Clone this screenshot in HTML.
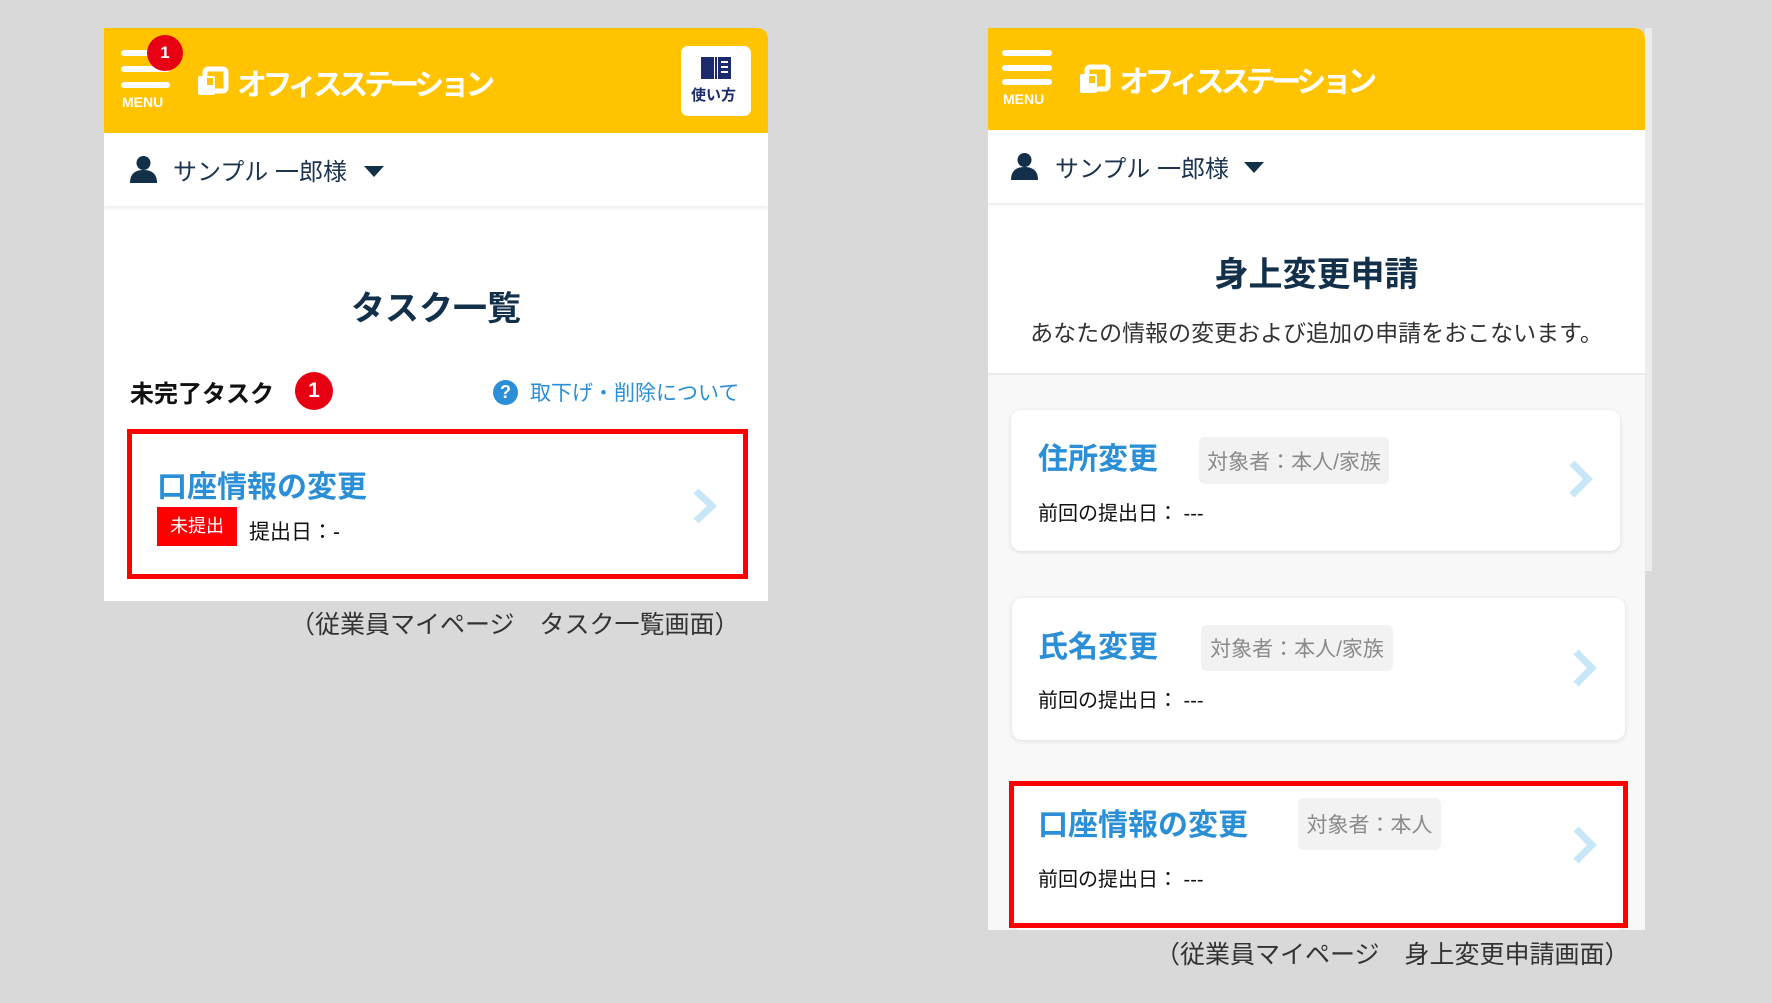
<!DOCTYPE html>
<html><head><meta charset="utf-8"><style>
*{margin:0;padding:0;box-sizing:border-box}
body{width:1772px;height:1003px;background:#d9d9d9;position:relative;overflow:hidden;font-family:"Liberation Sans","Noto Sans CJK JP",sans-serif}
.a{position:absolute;white-space:nowrap}
.panel{position:absolute;background:#fff;overflow:hidden}
.hdr{position:absolute;left:0;top:0;right:0;background:#ffc300;border-top-right-radius:10px}
.line{position:absolute;height:6px;background:#fff;border-radius:3px}
.menu{position:absolute;color:#fff;font-size:14px;font-weight:bold;letter-spacing:0}
.logo{font-size:30px;font-weight:bold;color:#fff;letter-spacing:-4.5px}
.user{font-size:24px;color:#1c3450}
.tri{position:absolute;width:0;height:0;border-left:10px solid transparent;border-right:10px solid transparent;border-top:11px solid #13304a}
.blue{color:#2a8fd6;font-weight:bold}
.tag{position:absolute;background:#f2f2f2;border-radius:6px;color:#8a8a8a;font-size:21px;display:flex;align-items:center;justify-content:center}
.card{position:absolute;background:#fff;border-radius:10px;box-shadow:0 1px 5px rgba(0,0,0,.12)}
.red{position:absolute;border:5px solid #ff0000}
.dt{font-size:20px;color:#111}
.cap{font-size:25px;color:#333}
</style></head><body>

<!-- LEFT PANEL -->
<div class="panel" style="left:104px;top:28px;width:664px;height:573px;border-top-right-radius:10px">
  <div class="hdr" style="height:105px"></div>
  <div class="line" style="left:17px;top:22px;width:49px"></div>
  <div class="line" style="left:17px;top:38px;width:49px"></div>
  <div class="line" style="left:17px;top:54px;width:49px"></div>
  <div class="menu" style="left:18px;top:66px">MENU</div>
  <div class="a" style="left:43px;top:7px;width:36px;height:36px;border-radius:50%;background:#e60012;color:#fff;font-weight:bold;font-size:17px;text-align:center;line-height:36px">1</div>
  <svg class="a" style="left:93px;top:38px" width="32" height="30" viewBox="0 0 32 30"><rect x="8" y="3" width="21" height="22" rx="3" fill="none" stroke="#fff" stroke-width="5"/><rect x="1" y="10" width="17" height="19" rx="2" fill="#fff"/><rect x="10" y="12" width="6" height="7" fill="#ffc300"/></svg>
  <div class="a logo" style="left:133px;top:32px">オフィスステーション</div>
  <div class="a" style="left:577px;top:18px;width:70px;height:70px;background:#fff;border-radius:7px">
    <svg class="a" style="left:18px;top:9px" width="34" height="26" viewBox="0 0 34 26"><path d="M2 2h13v22H2z M19 2h13v22H19z" fill="#1a2a6c"/><path d="M22 7h7M22 12h7M22 17h7" stroke="#fff" stroke-width="2"/><rect x="16" y="2" width="2" height="22" fill="#1a2a6c"/></svg>
    <div class="a" style="left:10px;top:38px;font-size:15px;font-weight:bold;color:#1a2a6c">使い方</div>
  </div>
  <div class="a" style="left:0;top:105px;width:664px;height:73px;box-shadow:0 2px 3px rgba(0,0,0,.08);background:#fff"></div>
  <svg class="a" style="left:26px;top:127px" width="27" height="28" viewBox="0 0 27 28"><circle cx="13.5" cy="8" r="7" fill="#13304a"/><path d="M0 28c0-9 5-13 13.5-13S27 19 27 28z" fill="#13304a"/></svg>
  <div class="a user" style="left:69px;top:124px">サンプル 一郎様</div>
  <div class="tri" style="left:260px;top:138px"></div>
  <div class="a" style="left:0;width:664px;text-align:center;top:253px;font-size:34px;font-weight:bold;color:#13304a">タスク一覧</div>
  <div class="a" style="left:26px;top:346px;font-size:24px;font-weight:bold;color:#111">未完了タスク</div>
  <div class="a" style="left:191px;top:344px;width:38px;height:38px;border-radius:50%;background:#e60012;color:#fff;font-weight:bold;font-size:21px;text-align:center;line-height:38px">1</div>
  <div class="a" style="left:389px;top:352px;width:25px;height:25px;border-radius:50%;background:#2a8fd6;color:#fff;font-weight:bold;font-size:18px;text-align:center;line-height:25px">?</div>
  <div class="a" style="left:426px;top:349px;font-size:21px;color:#2a8fd6">取下げ・削除について</div>
  <div class="a" style="left:53px;top:434px;font-size:30px" ><span class="blue">口座情報の変更</span></div>
  <div class="a" style="left:53px;top:479px;width:80px;height:39px;background:#ff0000;color:#fff;font-size:18px;text-align:center;line-height:39px">未提出</div>
  <div class="a" style="left:145px;top:488px;font-size:21px;color:#111">提出日：-</div>
  <svg class="a" style="left:588px;top:460px" width="26" height="36" viewBox="0 0 26 36"><path d="M4 3l16 15L4 33" fill="none" stroke="#c7e6f8" stroke-width="7"/></svg>
</div>
<div class="red" style="left:127px;top:429px;width:621px;height:150px"></div>
<div class="a cap" style="left:290px;top:605px">（従業員マイページ　タスク一覧画面）</div>

<!-- RIGHT PANEL -->
<div class="a" style="left:1645px;top:28px;width:7px;height:543px;background:#ececec"></div>
<div class="panel" style="left:988px;top:28px;width:657px;height:902px;border-top-right-radius:10px;background:#f8f8f8">
  <div class="hdr" style="height:102px"></div>
  <div class="line" style="left:14px;top:22px;width:50px"></div>
  <div class="line" style="left:14px;top:37px;width:50px"></div>
  <div class="line" style="left:14px;top:51px;width:50px"></div>
  <div class="menu" style="left:15px;top:63px">MENU</div>
  <svg class="a" style="left:91px;top:35px" width="32" height="32" viewBox="0 0 32 30"><rect x="8" y="3" width="21" height="22" rx="3" fill="none" stroke="#fff" stroke-width="5"/><rect x="1" y="10" width="17" height="19" rx="2" fill="#fff"/><rect x="10" y="12" width="6" height="7" fill="#ffc300"/></svg>
  <div class="a logo" style="left:131px;top:29px">オフィスステーション</div>
  <div class="a" style="left:0;top:102px;width:657px;height:244px;background:#fff"></div>
  <div class="a" style="left:0;top:102px;width:657px;height:73px;box-shadow:0 2px 3px rgba(0,0,0,.08);background:#fff"></div>
  <svg class="a" style="left:23px;top:124px" width="27" height="28" viewBox="0 0 27 28"><circle cx="13.5" cy="8" r="7" fill="#13304a"/><path d="M0 28c0-9 5-13 13.5-13S27 19 27 28z" fill="#13304a"/></svg>
  <div class="a user" style="left:67px;top:121px">サンプル 一郎様</div>
  <div class="tri" style="left:256px;top:134px"></div>
  <div class="a" style="left:0;width:657px;text-align:center;top:219px;font-size:34px;font-weight:bold;color:#13304a">身上変更申請</div>
  <div class="a" style="left:0;width:657px;text-align:center;top:286px;font-size:23px;color:#333">あなたの情報の変更および追加の申請をおこないます。</div>
  <div class="a" style="left:0;top:345px;width:657px;height:2px;background:#ececec"></div>

  <div class="card" style="left:23px;top:382px;width:609px;height:141px"></div>
  <div class="a blue" style="left:50px;top:406px;font-size:30px">住所変更</div>
  <div class="tag" style="left:211px;top:409px;width:190px;height:47px">対象者：本人/家族</div>
  <div class="a dt" style="left:50px;top:469px">前回の提出日： ---</div>
  <svg class="a" style="left:580px;top:432px" width="26" height="38" viewBox="0 0 26 38"><path d="M4 3l16 16L4 35" fill="none" stroke="#c7e6f8" stroke-width="7"/></svg>

  <div class="card" style="left:24px;top:570px;width:613px;height:142px"></div>
  <div class="a blue" style="left:50px;top:594px;font-size:30px">氏名変更</div>
  <div class="tag" style="left:213px;top:597px;width:192px;height:46px">対象者：本人/家族</div>
  <div class="a dt" style="left:50px;top:656px">前回の提出日： ---</div>
  <svg class="a" style="left:584px;top:621px" width="26" height="38" viewBox="0 0 26 38"><path d="M4 3l16 16L4 35" fill="none" stroke="#c7e6f8" stroke-width="7"/></svg>

  <div class="card" style="left:23px;top:756px;width:615px;height:146px"></div>
  <div class="a blue" style="left:50px;top:772px;font-size:30px">口座情報の変更</div>
  <div class="tag" style="left:310px;top:770px;width:143px;height:52px">対象者：本人</div>
  <div class="a dt" style="left:50px;top:835px">前回の提出日： ---</div>
  <svg class="a" style="left:584px;top:798px" width="26" height="38" viewBox="0 0 26 38"><path d="M4 3l16 16L4 35" fill="none" stroke="#c7e6f8" stroke-width="7"/></svg>
</div>
<div class="red" style="left:1009px;top:781px;width:619px;height:147px"></div>
<div class="a cap" style="left:1155px;top:935px">（従業員マイページ　身上変更申請画面）</div>
</body></html>
